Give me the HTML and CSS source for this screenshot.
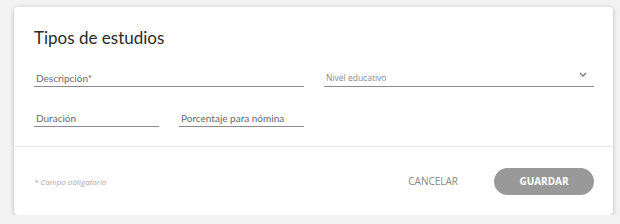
FILE: index.html
```html
<!DOCTYPE html>
<html lang="es">
<head>
  <meta charset="UTF-8">
  <title>Tipos de estudios</title>
  <link rel="stylesheet" href="styles.css">
</head>
<body>
  <div class="card">
    <div class="card-body">
      <h2 class="title">Tipos de estudios</h2>

      <div class="row">
        <div class="field wide"><span class="label">Descripción*</span></div>
        <div class="field wide select">
          <span class="label small">Nivel educativo</span>
          <svg class="chevron" width="8" height="5" viewBox="0 0 8 5">
            <path d="M1 1l3 3 3-3" fill="none" stroke="#777" stroke-width="1.3"/>
          </svg>
        </div>
      </div>

      <div class="row">
        <div class="field short"><span class="label">Duración</span></div>
        <div class="field short"><span class="label">Porcentaje para nómina</span></div>
      </div>
    </div>

    <div class="card-footer">
      <span class="note">* Campo obligatorio</span>
      <div class="actions">
        <button class="btn-text">CANCELAR</button>
        <button class="btn-save">GUARDAR</button>
      </div>
    </div>
  </div>
</body>
</html>
```

FILE: styles.css
```css
body {
  font-family: 'Open Sans', 'Liberation Sans', sans-serif;
  background-color: #f3f3f3;
  margin: 0;
  padding: 7px 0 0 14px;
}

.card {
  width: 599px;
  height: 208px;
  background: #fff;
  border-radius: 4px;
  box-shadow: 0 1px 4px rgba(0,0,0,0.25);
  display: flex;
  flex-direction: column;
}

.card-body {
  height: 140px;
  box-sizing: border-box;
  padding: 19px 19px 0 20px;
  border-bottom: 1px solid #e6e6e6;
}

.title {
  margin: 0 0 16px 0;
  font-family: 'Lato', 'Open Sans', sans-serif;
  font-size: 17px;
  line-height: 24px;
  font-weight: 400;
  color: #2a2a2a;
}

.row {
  display: flex;
  gap: 20px;
  margin-bottom: 19px;
}

.field {
  height: 20px;
  border-bottom: 1px solid #8c8c8c;
  display: flex;
  align-items: flex-end;
  justify-content: space-between;
}

.field.wide {
  width: 270px;
}

.field.short {
  width: 125px;
}

.label {
  font-family: 'Lato', 'Open Sans', sans-serif;
  font-size: 10px;
  line-height: 16px;
  color: #6a6a6a;
  padding-left: 2px;
}

.label.small {
  font-family: 'Open Sans', sans-serif;
  font-size: 8.5px;
  color: #8a8a99;
}

.chevron {
  margin: 0 7px 9px 0;
}

.card-footer {
  flex: 1;
  display: flex;
  align-items: center;
  justify-content: space-between;
  padding: 0 19px 0 20px;
}

.note {
  font-size: 8px;
  font-style: italic;
  color: #aaa;
}

.actions {
  display: flex;
  align-items: center;
  gap: 36px;
}

.btn-text {
  background: none;
  border: none;
  font-family: inherit;
  font-size: 10px;
  color: #888;
  padding: 0;
  cursor: pointer;
}

.btn-save {
  width: 100px;
  height: 27px;
  border: none;
  border-radius: 14px;
  background-color: #999;
  color: #fff;
  font-family: inherit;
  font-size: 10px;
  font-weight: 700;
  cursor: pointer;
}
```
